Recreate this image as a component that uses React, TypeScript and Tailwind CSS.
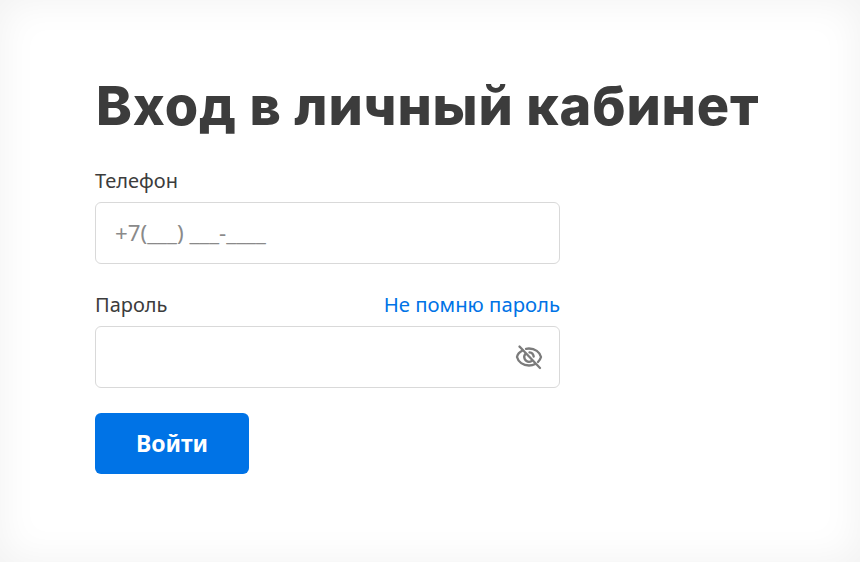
import { useState } from "react";

const font = "font-['Noto_Sans',sans-serif]";

const EyeOff = () => (
  <svg width="28" height="28" viewBox="0 0 28 28" fill="none" stroke="#7b7b7b" strokeWidth="2.3" strokeLinecap="round" strokeLinejoin="round">
    <path d="M7.500 7.500C4.500 9 2.500 11.500 2 14c1.200 5 6 8.500 12 8.500 2.300 0 4.400-.5 6.200-1.500" />
    <path d="M11 5.800A14 14 0 0 1 14 5.500c6 0 10.800 3.500 12 8.500-.5 2-1.600 3.600-3 5" />
    <path d="M10.300 11A4.800 4.800 0 0 0 14 18.800c1 0 1.900-.3 2.700-.8" />
    <path d="M14.500 9.300a4.800 4.800 0 0 1 4.200 4.200" />
    <path d="M4.500 3.500l20.500 21.500" />
  </svg>
);

const App = () => {
  const [phone, setPhone] = useState("");

  return (
    <div className={`${font} w-full h-[562px] bg-white shadow-[inset_0_0_40px_rgba(0,0,0,0.06)] pl-[95px] pt-[73px] text-[#3c3c3c]`}>
      <h1 className="font-['Inter',sans-serif] font-extrabold text-[54px] leading-[66px] tracking-[0.85px] ml-[1px] mb-[28px] whitespace-nowrap">
        Вход в личный кабинет
      </h1>

      <form className="w-[465px] flex flex-col">
        <label className="text-[20px] leading-[28px] mb-[7px]">Телефон</label>
        <input
          value={phone}
          onChange={(e) => setPhone(e.target.value)}
          placeholder="+7(___) ___-____"
          className="h-[62px] w-full rounded-[6px] border border-[#d9d9d9] bg-white px-[19px] pb-[2px] text-[22.300px] outline-none placeholder:text-[#8a8a8a]"
        />

        <div className="flex items-center justify-between mt-[27px] mb-[7px]">
          <label className="text-[20px] leading-[28px]">Пароль</label>
          <a href="#" className="text-[20.300px] leading-[28px] text-[#0073e6] -translate-y-px">Не помню пароль</a>
        </div>
        <div className="h-[62px] w-full rounded-[6px] border border-[#d9d9d9] bg-white flex items-center justify-end pr-[16px]">
          <EyeOff />
        </div>

        <button type="button" className="mt-[25px] h-[61px] w-[154px] rounded-[6px] bg-[#0073e6] text-white font-bold text-[23px]">
          Войти
        </button>
      </form>
    </div>
  );
};

export default App;
